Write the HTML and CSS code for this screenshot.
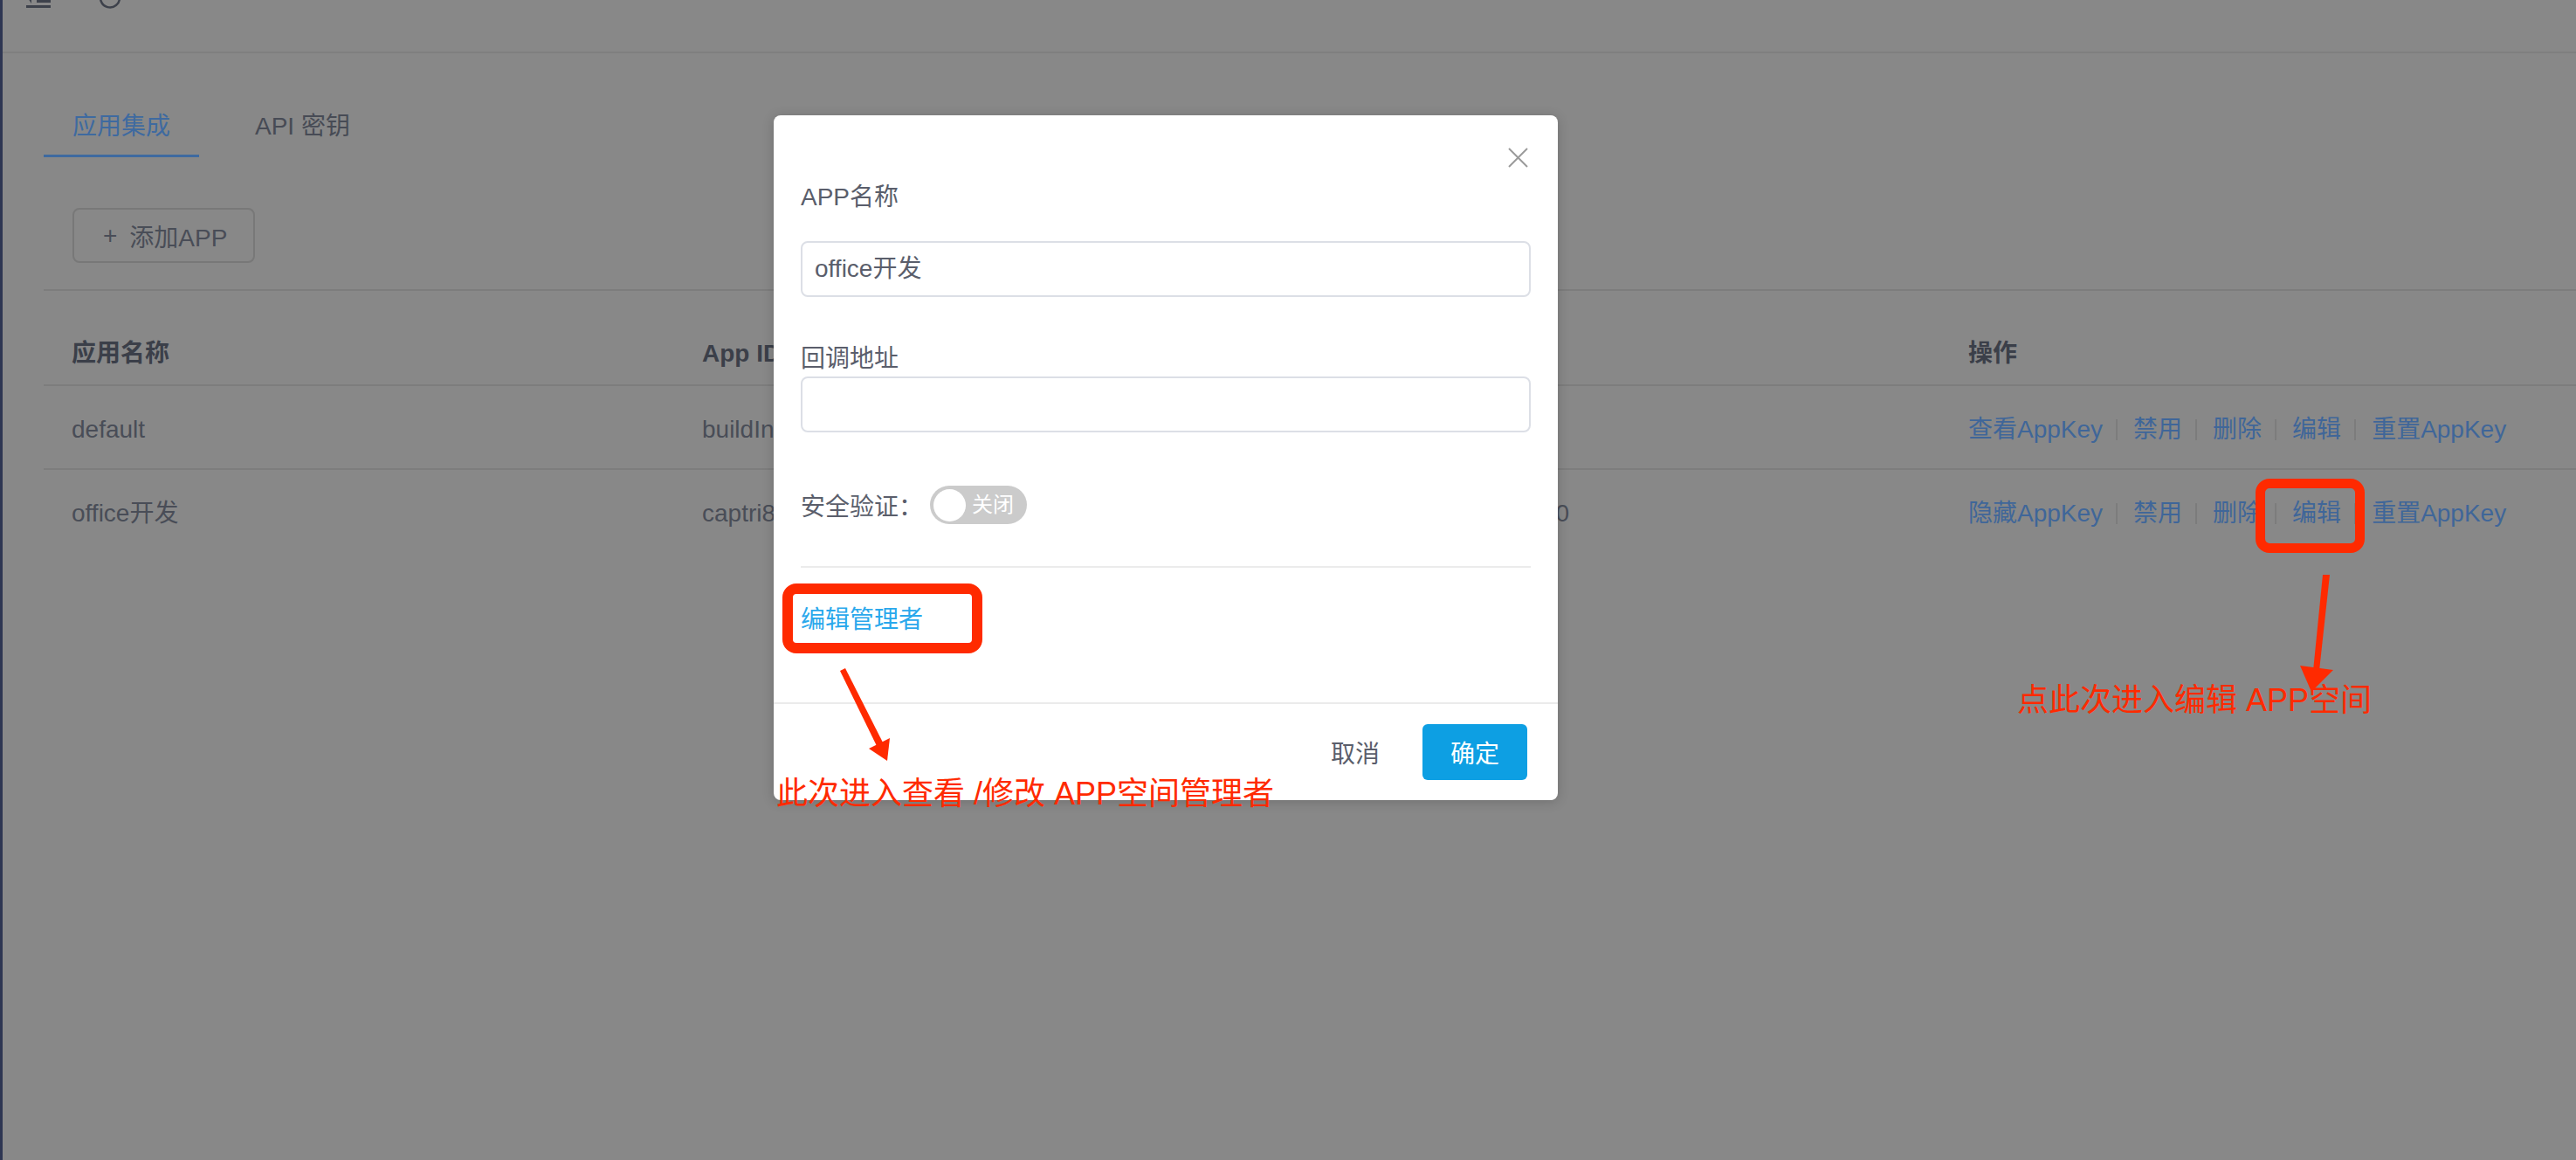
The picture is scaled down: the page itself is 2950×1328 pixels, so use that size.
FILE: index.html
```html
<!DOCTYPE html>
<html lang="zh-CN">
<head>
  <meta charset="UTF-8">
  <title>应用集成</title>
  <link rel="stylesheet" href="styles.css">
</head>
<body>
  <div class="app">
    <div class="sidebar"></div>
    <div class="main">
      <div class="topbar">
        <svg class="icon-fold" viewBox="0 0 28 28">
          <rect x="0" y="0" width="28" height="3" fill="#3d414b"/>
          <rect x="12" y="7" width="16" height="3" fill="#3d414b"/>
          <rect x="12" y="13" width="16" height="3" fill="#3d414b"/>
          <rect x="12" y="19" width="16" height="3" fill="#3d414b"/>
          <polygon points="0,14 6,9 6,23" fill="#3d414b"/>
          <rect x="0" y="25" width="28" height="3" fill="#3d414b"/>
        </svg>
        <svg class="icon-refresh" viewBox="0 0 26 26">
          <path d="M21.5 6.5 A11 11 0 1 0 24 13" fill="none" stroke="#3d414b" stroke-width="2.5" stroke-linecap="round"/>
          <polygon points="24,1 24,9 16,8" fill="#3d414b"/>
        </svg>
      </div>

      <div class="content">
        <div class="tabs">
          <div class="tab active">应用集成</div>
          <div class="tab">API 密钥</div>
        </div>

        <div class="toolbar">
          <button class="btn-add"><span class="plus">+</span>添加APP</button>
        </div>

        <div class="table">
          <div class="row head">
            <div class="cell">应用名称</div>
            <div class="cell">App ID</div>
            <div class="cell">创建时间</div>
            <div class="cell">操作</div>
          </div>
          <div class="row body">
            <div class="cell">default</div>
            <div class="cell">buildInApp</div>
            <div class="cell">-</div>
            <div class="cell ops">
              <a href="#">查看AppKey</a>
              <a href="#">禁用</a>
              <a href="#">删除</a>
              <a href="#">编辑</a>
              <a href="#">重置AppKey</a>
            </div>
          </div>
          <div class="row body">
            <div class="cell">office开发</div>
            <div class="cell">captri8k</div>
            <div class="cell">2021-05-20 16:34:20</div>
            <div class="cell ops">
              <a href="#">隐藏AppKey</a>
              <a href="#">禁用</a>
              <a href="#">删除</a>
              <a href="#">编辑</a>
              <a href="#">重置AppKey</a>
            </div>
          </div>
        </div>
      </div>
    </div>
  </div>

  <!-- edit dialog -->
  <div class="dialog">
    <button class="dialog-close">
      <svg viewBox="0 0 23 23">
        <line x1="1" y1="1" x2="22" y2="22" stroke="#9a9a9a" stroke-width="2"/>
        <line x1="22" y1="1" x2="1" y2="22" stroke="#9a9a9a" stroke-width="2"/>
      </svg>
    </button>
    <div class="dialog-body">
      <div class="form-label name">APP名称</div>
      <div class="input">office开发</div>
      <div class="form-label url">回调地址</div>
      <div class="input"></div>
      <div class="form-row">
        <span>安全验证：</span>
        <span class="switch"><span class="knob"></span><span class="switch-text">关闭</span></span>
      </div>
      <div class="divider"></div>
      <a class="link-admin" href="#">编辑管理者</a>
    </div>
    <div class="dialog-footer">
      <button class="btn-cancel">取消</button>
      <button class="btn-primary">确定</button>
    </div>
  </div>

  <!-- screenshot annotations -->
  <div class="notes">
    <div class="mark mark-admin"></div>
    <div class="mark mark-edit"></div>
    <svg class="arrows" viewBox="0 0 2950 1328">
      <polygon points="962,768 968,765 1011,850 1004,854" fill="#ff2a00"/>
      <polygon points="995,857 1019,845 1016,871" fill="#ff2a00"/>
      <polygon points="2660,658 2668,658 2656,768 2649,768" fill="#ff2a00"/>
      <polygon points="2634,762 2672,767 2647,792" fill="#ff2a00"/>
    </svg>
    <div class="note note-admin">此次进入查看 /修改 APP空间管理者</div>
    <div class="note note-edit">点此次进入编辑 APP空间</div>
  </div>
</body>
</html>
```

FILE: styles.css
```css
* {
  box-sizing: border-box;
}
html, body {
  margin: 0;
}
body {
  position: relative;
  width: 2950px;
  height: 1328px;
  overflow: hidden;
  background: #888888;
  font-family: "Liberation Sans", "Noto Sans CJK SC", sans-serif;
  font-size: 28px;
  color: #494d57;
}

/* page behind the dialog mask */
.app {
  display: flex;
  height: 100%;
}
.sidebar {
  flex: none;
  width: 3px;
  background: #2e3652;
}
.main {
  flex: 1;
  min-width: 0;
}
.topbar {
  display: flex;
  align-items: flex-start;
  gap: 55px;
  height: 61px;
  padding-left: 27px;
  border-bottom: 2px solid #7f7f7f;
  overflow: hidden;
}
.topbar svg {
  flex: none;
}
.icon-fold {
  width: 28px;
  height: 28px;
  margin-top: -19px;
}
.icon-refresh {
  width: 26px;
  height: 26px;
  margin-top: -16px;
}
.content {
  padding-left: 47px;
}
.tabs {
  display: flex;
  gap: 31px;
  margin-top: 64px;
}
.tab {
  line-height: 40px;
  padding: 0 33px 12px;
  border-bottom: 3px solid transparent;
  color: #474b55;
}
.tab.active {
  color: #3e6aa0;
  border-bottom-color: #3e6aa0;
}
.toolbar {
  margin-top: 58px;
  padding: 0 0 30px 33px;
  border-bottom: 2px solid #7d7d7d;
}
.btn-add {
  display: flex;
  align-items: center;
  height: 63px;
  padding: 0 30px 0 33px;
  border: 2px solid #787878;
  border-radius: 8px;
  background: transparent;
  font: inherit;
  color: #494d57;
}
.btn-add .plus {
  margin-right: 14px;
}
.row {
  display: grid;
  grid-template-columns: 722px 733px 717px 1fr;
}
.cell {
  padding-left: 32px;
  line-height: 40px;
  white-space: nowrap;
}
.row.head {
  border-bottom: 2px solid #7d7d7d;
}
.row.head .cell {
  padding-top: 52px;
  padding-bottom: 15px;
  font-weight: 600;
  color: #3b3f49;
}
.row.body .cell {
  padding-top: 30px;
  padding-bottom: 24px;
}
.row.body:not(:last-child) {
  border-bottom: 2px solid #7d7d7d;
}
.ops {
  display: flex;
}
.ops a {
  color: #3f6699;
  text-decoration: none;
}
.ops a + a::before {
  content: "";
  display: inline-block;
  width: 2px;
  height: 24px;
  margin: 0 18px 0 15px;
  background: #7c7c7c;
  vertical-align: -3px;
}

/* dialog */
.dialog {
  position: absolute;
  left: 886px;
  top: 132px;
  width: 898px;
  background: #fff;
  border-radius: 8px;
  box-shadow: 0 2px 14px rgba(0, 0, 0, 0.18);
}
.dialog-close {
  position: absolute;
  top: 37px;
  right: 34px;
  width: 23px;
  height: 23px;
  padding: 0;
  border: 0;
  background: none;
}
.dialog-close svg {
  display: block;
  width: 23px;
  height: 23px;
}
.dialog-body {
  padding: 74px 31px;
  color: #5a5e6b;
}
.form-label {
  line-height: 40px;
}
.form-label.name {
  margin-bottom: 30px;
}
.form-label.url {
  margin-top: 51px;
}
.input {
  height: 64px;
  padding: 0 14px;
  border: 2px solid #dcdfe6;
  border-radius: 8px;
  line-height: 60px;
}
.form-row {
  display: flex;
  align-items: center;
  height: 44px;
  margin-top: 61px;
}
.switch {
  display: flex;
  align-items: center;
  width: 111px;
  height: 44px;
  margin-left: 8px;
  border-radius: 22px;
  background: #cbcbcb;
}
.knob {
  width: 37px;
  height: 37px;
  margin-left: 4px;
  border-radius: 50%;
  background: #fff;
}
.switch-text {
  margin-left: 7px;
  font-size: 24px;
  line-height: 1;
  color: #fff;
}
.divider {
  height: 2px;
  margin-top: 48px;
  background: #ebebeb;
}
.link-admin {
  display: block;
  margin-top: 40px;
  line-height: 40px;
  color: #2aa8ec;
  text-decoration: none;
}
.dialog-footer {
  display: flex;
  justify-content: flex-end;
  align-items: center;
  padding: 23px 35px;
  border-top: 2px solid #ebebeb;
}
.btn-cancel {
  height: 64px;
  padding: 0 25px;
  margin-right: 24px;
  border: 0;
  background: none;
  font: inherit;
  color: #5a5e6b;
}
.btn-primary {
  width: 120px;
  height: 64px;
  border: 0;
  border-radius: 6px;
  background: #0d9fe3;
  font: inherit;
  color: #fff;
}

/* annotations drawn over the screenshot */
.notes {
  position: absolute;
  left: 0;
  top: 0;
  width: 2950px;
  height: 1328px;
  pointer-events: none;
}
.mark {
  position: absolute;
  border: 12px solid #ff2a00;
  border-radius: 16px;
}
.mark-admin {
  left: 896px;
  top: 668px;
  width: 229px;
  height: 80px;
}
.mark-edit {
  left: 2583px;
  top: 548px;
  width: 125px;
  height: 85px;
  border-width: 11px;
}
.arrows {
  position: absolute;
  left: 0;
  top: 0;
  width: 2950px;
  height: 1328px;
}
.note {
  position: absolute;
  font-size: 36px;
  line-height: 1;
  color: #ff2a00;
  white-space: nowrap;
}
.note-admin {
  left: 889px;
  top: 891px;
}
.note-edit {
  left: 2310px;
  top: 784px;
}
```
